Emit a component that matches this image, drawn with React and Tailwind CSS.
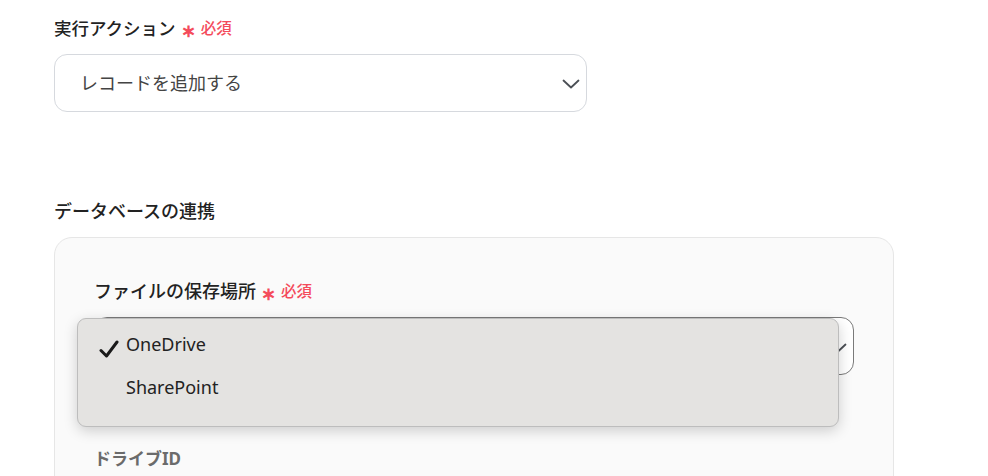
import React from "react";

const font = { fontFamily: '"Noto Sans", "Noto Sans CJK JP", sans-serif' };

function Chevron({ className }) {
  return (
    <svg className={className} width="18" height="10" viewBox="0 0 18 10" fill="none">
      <path d="M1.5 1.5 L9 8.5 L16.5 1.5" stroke="#4b4f55" strokeWidth="1.8" strokeLinecap="round" strokeLinejoin="round" />
    </svg>
  );
}

function Required() {
  return (
    <>
      <span className="ml-[5px] mt-[3px] text-[18px] text-[#f44b5b] font-bold leading-none">∗</span>
      <span className="ml-[5px] mt-[2px] text-[15.5px] leading-none text-[#f44b5b] font-medium">必須</span>
    </>
  );
}

export default function App() {
  return (
    <div className="w-[988px] h-[476px] overflow-hidden bg-white relative" style={font}>
      <div className="pl-[54px] pt-[15px]">
        <div className="flex items-center h-[26px]">
          <span className="text-[17.5px] font-medium text-[#222]">実行アクション</span>
          <Required />
        </div>
        <div className="mt-[13px] w-[533px] h-[58px] rounded-[13px] border border-[#d6d9de] flex items-center justify-between pl-[25px] pr-[6px]">
          <span className="text-[18px] text-[#444]">レコードを追加する</span>
          <Chevron className="mt-[1px]" />
        </div>

        <div className="mt-[86px] h-[26px] flex items-center">
          <span className="text-[18px] font-medium text-[#222]">データベースの連携</span>
        </div>

        <div className="mt-[13px] w-[840px] h-[300px] rounded-[18px] border border-[#e6e6e6] bg-[#fafafa] pl-[39px] pr-[39px] pt-[40px]">
          <div className="flex items-center h-[26px]">
            <span className="text-[18px] font-medium text-[#222]">ファイルの保存場所</span>
            <Required />
          </div>
          <div className="relative mt-[13px] w-[760px] h-[58px] rounded-[13px] border border-[#7a7a7a] bg-white flex items-center justify-end pr-[6px]">
            <Chevron className="mt-[4px]" />
            <div className="absolute left-[-18px] top-0 w-[762px] h-[109px] rounded-[9px] bg-[#e4e3e1] border border-[#bdbdbd] shadow-[0_4px_14px_rgba(0,0,0,0.18)] pt-[10px]">
              <div className="flex items-center h-[30px]">
                <svg className="ml-[21px] mt-[10px]" width="20" height="18" viewBox="0 0 20 18" fill="none">
                  <path d="M2 10.5 L7.5 16 L18 2" stroke="#1a1a1a" strokeWidth="3" strokeLinecap="round" strokeLinejoin="round" />
                </svg>
                <span className="ml-[7px] text-[18px] text-[#222]">OneDrive</span>
              </div>
              <div className="flex items-center h-[30px] mt-[13px]">
                <span className="ml-[48px] text-[18px] text-[#222]">SharePoint</span>
              </div>
            </div>
          </div>
          <div className="mt-[71px] h-[26px] flex items-center">
            <span className="text-[17px] font-bold text-[#6b6b6b]">ドライブID</span>
          </div>
        </div>
      </div>
    </div>
  );
}
